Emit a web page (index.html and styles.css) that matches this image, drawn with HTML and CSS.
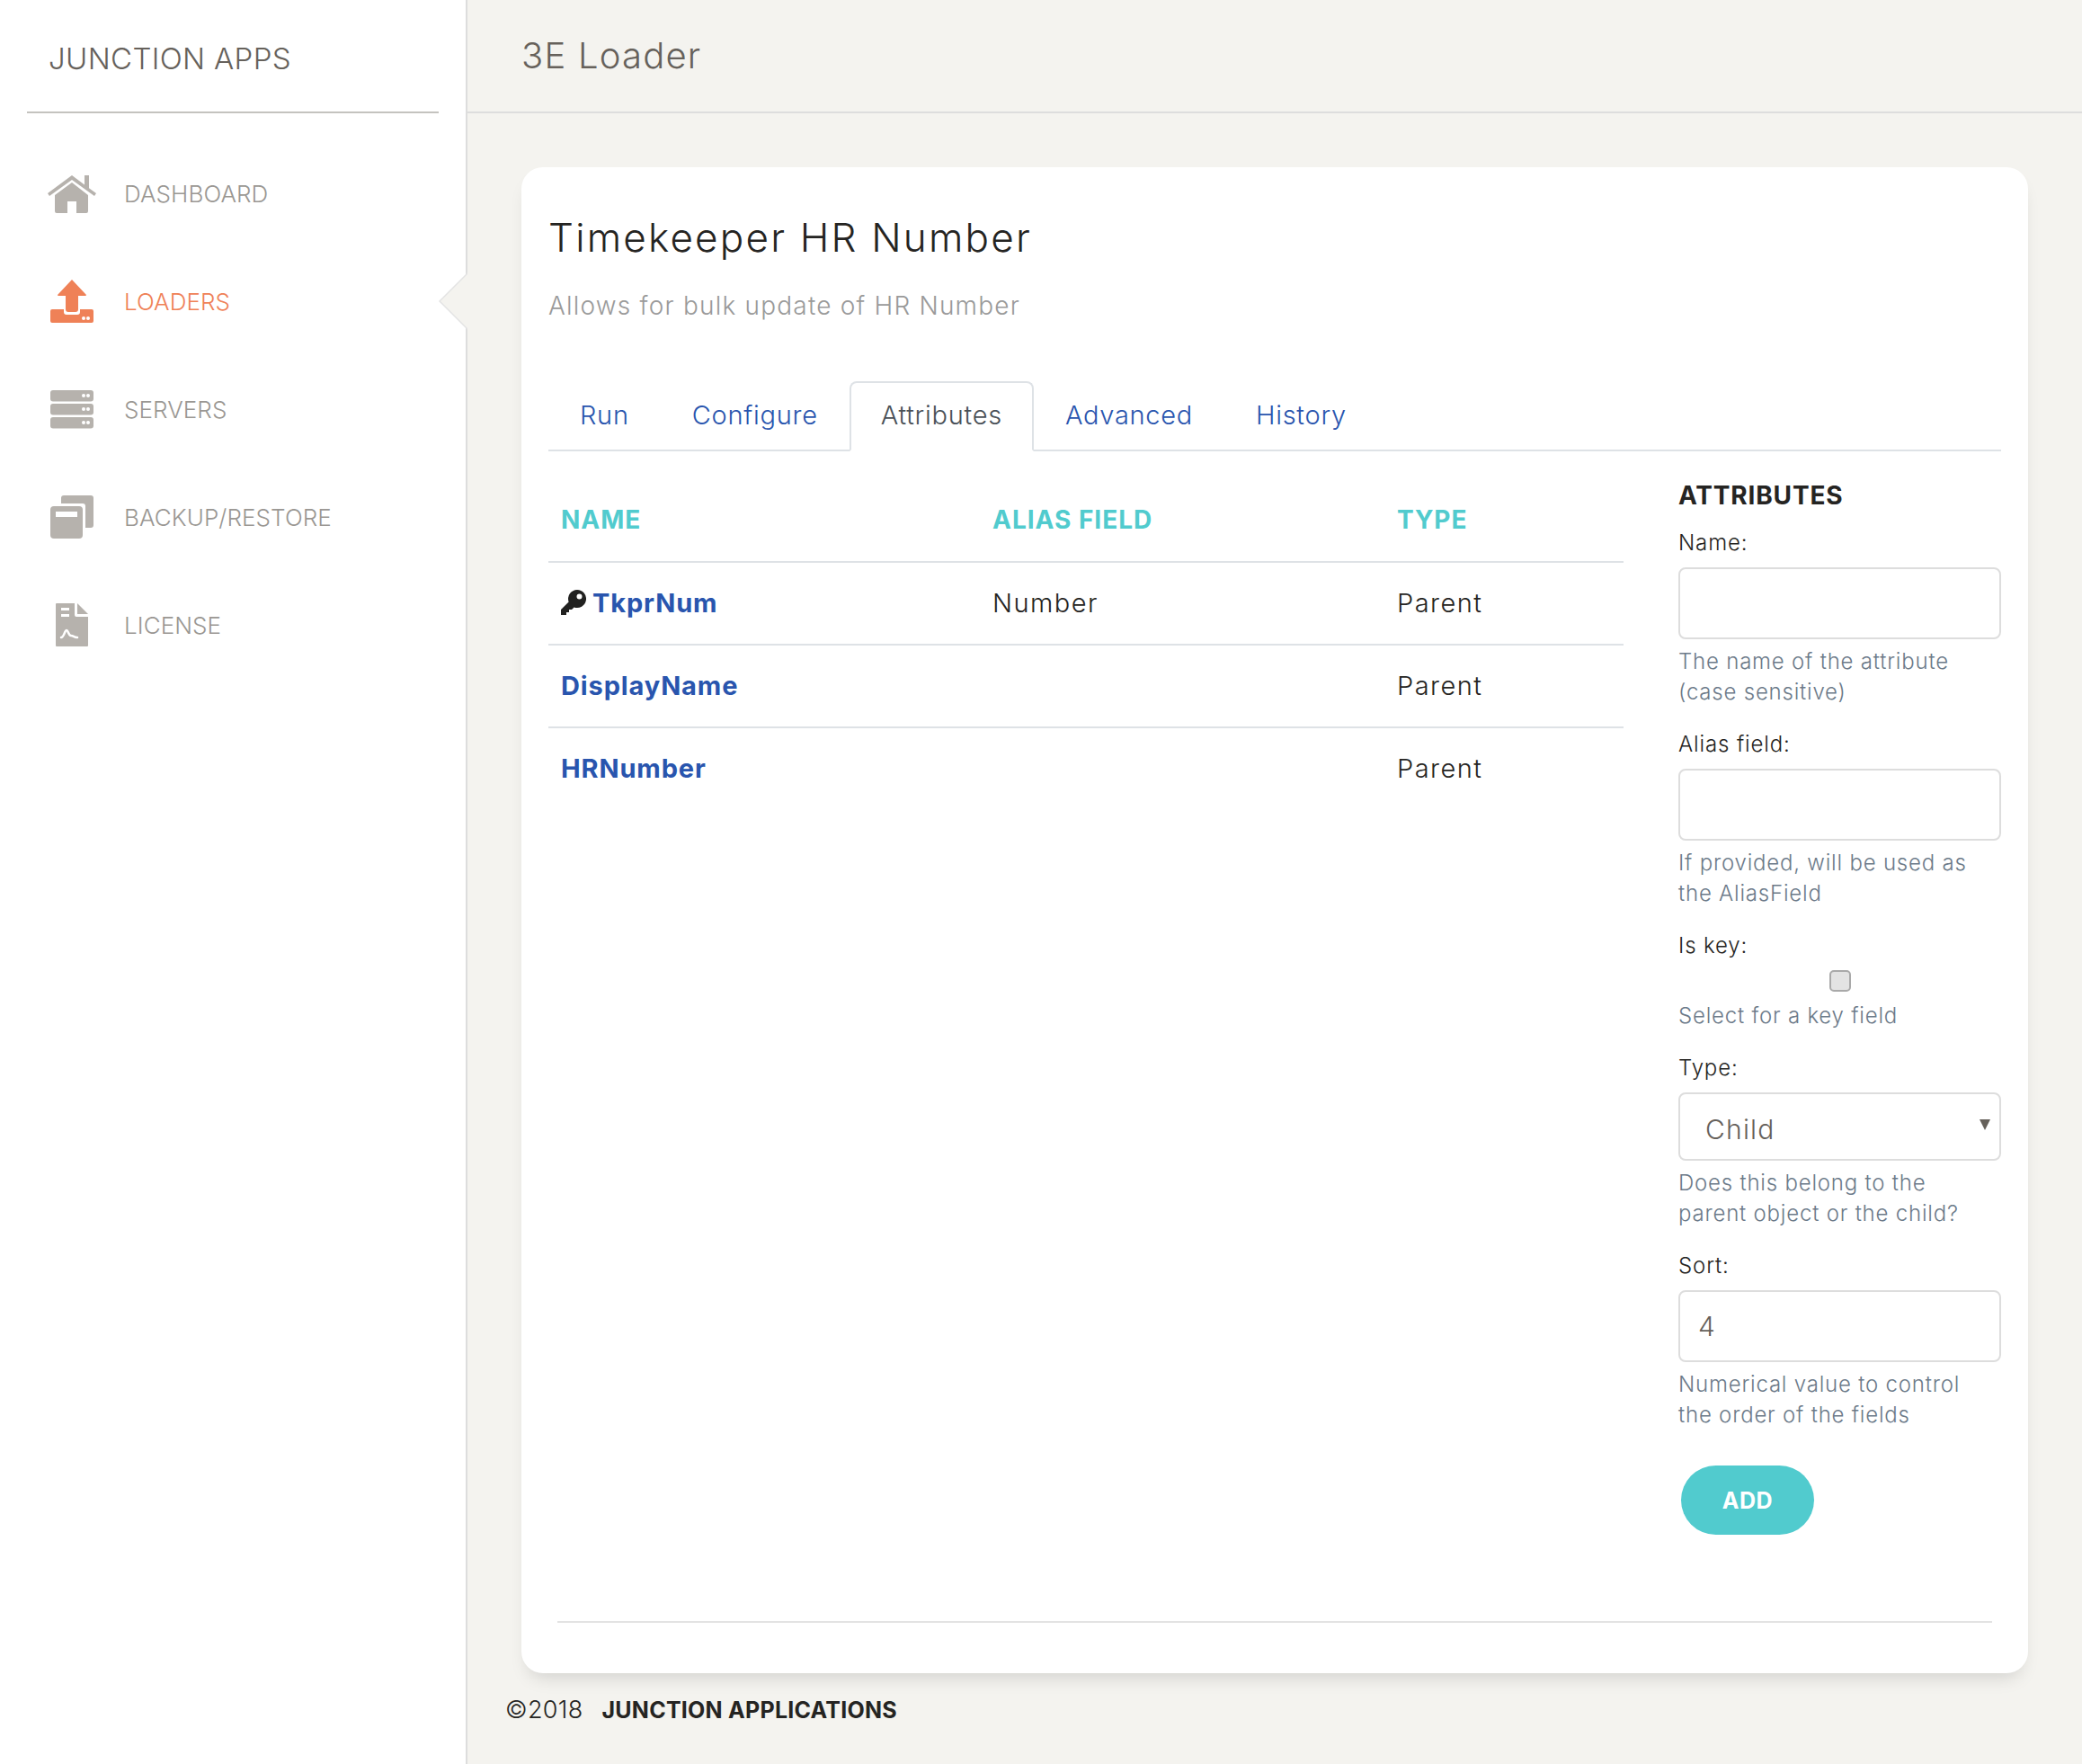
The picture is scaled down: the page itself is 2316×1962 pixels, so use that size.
FILE: index.html
```html
<!DOCTYPE html>
<html lang="en">
	<head>
		<meta charset="UTF-8" />
		<title>3E Loader</title>
		<link rel="stylesheet" href="styles.css">
	</head>
	<body>
		<aside class="sidebar">
			<div class="brand">JUNCTION APPS</div>
			<nav class="nav">
				<a class="nav-item">
					<svg class="nav-icon" viewBox="-3 0 54 48"><path d="M-3 24L24 4L38 14.5V4H43V18.3L51 24L49 27L24 9L-1 27Z"/><path d="M24 12L42 26V44a2 2 0 0 1-2 2H29V33H19V46H7a2 2 0 0 1-2-2V26Z"/></svg>
					<span>DASHBOARD</span>
				</a>
				<a class="nav-item active">
					<svg class="nav-icon" viewBox="-3 0 54 48"><path d="M24 0L40 17a1 1 0 0 1-1 1H31V33a3 3 0 0 1-3 3H20a3 3 0 0 1-3-3V18H9a1 1 0 0 1-1-1Z"/><path d="M2 33H15V36a3 3 0 0 0 3 3H30a3 3 0 0 0 3-3V33H46a2 2 0 0 1 2 2V46a2 2 0 0 1-2 2H2a2 2 0 0 1-2-2V35a2 2 0 0 1 2-2Z"/><circle class="cut" cx="37" cy="43" r="2"/><circle class="cut" cx="42" cy="43" r="2"/></svg>
					<span>LOADERS</span>
				</a>
				<a class="nav-item">
					<svg class="nav-icon" viewBox="-3 0 54 48"><rect y="3" width="48" height="12.5" rx="3"/><rect y="18" width="48" height="12.5" rx="3"/><rect y="33" width="48" height="12.5" rx="3"/><circle class="cut" cx="37" cy="9" r="2"/><circle class="cut" cx="42" cy="9" r="2"/><circle class="cut" cx="37" cy="24" r="2"/><circle class="cut" cx="42" cy="24" r="2"/><circle class="cut" cx="37" cy="39" r="2"/><circle class="cut" cx="42" cy="39" r="2"/></svg>
					<span>SERVERS</span>
				</a>
				<a class="nav-item">
					<svg class="nav-icon" viewBox="-3 0 54 48"><path d="M15 0H45a3 3 0 0 1 3 3V33a3 3 0 0 1-3 3H39V12a3 3 0 0 0-3-3H12V3a3 3 0 0 1 3-3Z"/><rect y="12" width="36" height="36" rx="4"/><rect class="cut" x="6" y="18" width="24" height="6"/></svg>
					<span>BACKUP/RESTORE</span>
				</a>
				<a class="nav-item">
					<svg class="nav-icon" viewBox="-3 0 54 48"><path d="M7 0H27V13a2 2 0 0 0 2 2H42V47a1 1 0 0 1-1 1H7a1 1 0 0 1-1-1V1a1 1 0 0 1 1-1Z"/><path d="M30 0L42 12H30Z"/><rect class="cut" x="12" y="5" width="9" height="3"/><rect class="cut" x="12" y="12" width="9" height="3"/><path class="cut-line" d="M12 38C15 38 16 30 18 30C20 30 20 36 23 36C26 36 26 38 30 38"/></svg>
					<span>LICENSE</span>
				</a>
			</nav>
		</aside>

		<main class="main">
			<header class="topbar">3E Loader</header>
			<section class="card">
				<h1>Timekeeper HR Number</h1>
				<p class="subtitle">Allows for bulk update of HR Number</p>

				<ul class="tabs">
					<li><a>Run</a></li>
					<li><a>Configure</a></li>
					<li><a class="current">Attributes</a></li>
					<li><a>Advanced</a></li>
					<li><a>History</a></li>
				</ul>

				<div class="columns">
					<table class="attr-table">
						<thead>
							<tr><th class="col-name">NAME</th><th class="col-alias">ALIAS FIELD</th><th>TYPE</th></tr>
						</thead>
						<tbody>
							<tr>
								<td>
									<svg class="key" viewBox="0 0 28 28"><path fill-rule="evenodd" d="M18 0A10 10 0 1 1 14.6 19.4L12 22H9V25H6V28H0V22L8.600 13.400A10 10 0 0 1 18 0ZM20.500 4.500A3 3 0 1 0 20.500 10.500A3 3 0 1 0 20.500 4.500Z"/></svg><a class="attr-link">TkprNum</a>
								</td>
								<td>Number</td>
								<td>Parent</td>
							</tr>
							<tr><td><a class="attr-link">DisplayName</a></td><td></td><td>Parent</td></tr>
							<tr><td><a class="attr-link">HRNumber</a></td><td></td><td>Parent</td></tr>
						</tbody>
					</table>

					<form class="attr-form">
						<h4>ATTRIBUTES</h4>

						<label>Name:</label>
						<input type="text" class="field" />
						<small>The name of the attribute<br>(case sensitive)</small>

						<label>Alias field:</label>
						<input type="text" class="field" />
						<small>If provided, will be used as<br>the AliasField</small>

						<label>Is key:</label>
						<div class="check-row"><input type="checkbox" class="check" /></div>
						<small>Select for a key field</small>

						<label>Type:</label>
						<div class="select-wrap">
							<select class="field select">
								<option>Child</option>
								<option>Parent</option>
							</select>
						</div>
						<small>Does this belong to the<br>parent object or the child?</small>

						<label>Sort:</label>
						<input type="text" class="field" value="4" />
						<small>Numerical value to control<br>the order of the fields</small>

						<button type="button" class="add-btn">ADD</button>
					</form>
				</div>

				<hr class="card-rule" />
			</section>
			<footer class="footer">
				<span>©2018</span>
				<strong>JUNCTION APPLICATIONS</strong>
			</footer>
		</main>
	</body>
</html>
```

FILE: styles.css
```css
* {
	box-sizing: border-box;
}
body {
	margin: 0;
	min-height: 100vh;
	display: flex;
	background: #f4f3ef;
	color: #252422;
	font-family: Inter, "Open Sans", sans-serif;
	font-size: 29px;
	letter-spacing: 0.03em;
}
.sidebar {
	width: 520px;
	flex: none;
	position: relative;
	background: #fff;
	border-right: 2px solid #dddddd;
	padding: 0 30px;
}
.brand {
	height: 126px;
	padding: 46px 0 0 24px;
	border-bottom: 2px solid #c4c3bf;
	color: #66615b;
	font-size: 33px;
	font-weight: 300;
	line-height: 38px;
	letter-spacing: 0.01em;
}
.nav {
	display: flex;
	flex-direction: column;
	gap: 72px;
	padding-top: 65px;
}
.nav-item {
	display: flex;
	align-items: center;
	gap: 31px;
	height: 48px;
	margin-left: 23px;
	color: #9a9793;
	font-size: 26px;
	font-weight: 300;
	letter-spacing: 0.003em;
}
.nav-item.active {
	color: #ef8157;
}
.nav-icon {
	width: 54px;
	height: 48px;
	flex: none;
	fill: #b6b2ad;
}
.active .nav-icon {
	fill: #ef8157;
}
.nav-icon .cut {
	fill: #fff;
}
.cut-line {
	fill: none;
	stroke: #fff;
	stroke-width: 2.500;
	stroke-linecap: round;
}
/* notch pointing at the current page: grey outline, page colour on top */
.nav-item.active::before,
.nav-item.active::after {
	content: "";
	position: absolute;
	right: -2px;
	top: 303px;
	width: 32px;
	height: 64px;
	background: #e3e3e3;
	clip-path: polygon(100% 0, 0 50%, 100% 100%);
}
.nav-item.active::after {
	top: 305px;
	width: 30px;
	height: 60px;
	background: #f4f3ef;
}

.main {
	flex: 1;
	display: flex;
	flex-direction: column;
}
.topbar {
	height: 126px;
	padding: 38px 0 0 60px;
	border-bottom: 2px solid #dddddd;
	color: #66615b;
	font-size: 40px;
	font-weight: 300;
	line-height: 48px;
	letter-spacing: 0.03em;
}
.card {
	margin: 60px 60px 0;
	padding: 50px 30px 56px;
	background: #fff;
	border-radius: 24px;
	box-shadow: 0 12px 20px -8px rgba(0, 0, 0, 0.15);
}
h1 {
	margin: 0;
	font-size: 44px;
	font-weight: 300;
	line-height: 56px;
	letter-spacing: 0.05em;
}
.subtitle {
	margin: 28px 0 64px;
	color: #9a9a9a;
	font-size: 28px;
	font-weight: 300;
	line-height: 40px;
	letter-spacing: 0.043em;
}
.tabs {
	display: flex;
	list-style: none;
	margin: 0;
	padding: 0;
	height: 78px;
	border-bottom: 2px solid #dee2e6;
}
.tabs a {
	display: block;
	height: 78px;
	padding: 0 33px;
	border: 2px solid transparent;
	border-radius: 8px 8px 0 0;
	color: #2955ae;
	font-weight: 300;
	line-height: 72px;
	letter-spacing: 0.025em;
}
.tabs a.current {
	border-color: #dee2e6 #dee2e6 #fff;
	color: #495057;
	background: #fff;
}

.columns {
	display: flex;
	justify-content: space-between;
	padding-top: 32px;
}
.attr-table {
	width: 1196px;
	height: 100%;
	border-collapse: collapse;
	table-layout: fixed;
	align-self: flex-start;
}
.col-name {
	width: 480px;
}
.col-alias {
	width: 450px;
}
.attr-table th {
	height: 91px;
	padding: 0 14px 2px;
	text-align: left;
	color: #51cbce;
	font-weight: 700;
	font-size: 28px;
	letter-spacing: 0.035em;
}
.attr-table td {
	height: 92px;
	padding: 0 14px 2px;
	border-top: 2px solid #dee2e6;
	font-weight: 300;
	letter-spacing: 0.05em;
}
.attr-link {
	color: #2955ae;
	font-weight: 700;
	letter-spacing: 0.03em;
}
.key {
	width: 28px;
	height: 28px;
	margin-right: 7px;
	vertical-align: -3px;
	fill: #212120;
}

.attr-form {
	width: 359px;
	display: flex;
	flex-direction: column;
	font-size: 24px;
	line-height: 34px;
}
h4 {
	margin: 0 0 19px;
	font-size: 28px;
	font-weight: 700;
	line-height: 34px;
	letter-spacing: 0.03em;
}
.attr-form label {
	margin-bottom: 10px;
	font-weight: 300;
}
.attr-form small {
	margin: 8px 0 24px;
	color: #6c7a89;
	font-size: 24px;
	font-weight: 300;
	letter-spacing: 0.033em;
}
.field {
	width: 100%;
	height: 80px;
	padding: 0 20px;
	border: 2px solid #dddddd;
	border-radius: 8px;
	background: #fff;
	color: #66615b;
	font: 300 30px Inter, sans-serif;
	letter-spacing: 0.04em;
}
.check-row {
	display: flex;
	justify-content: center;
	height: 24px;
	margin: 0 0 2px;
}
.check {
	appearance: none;
	width: 24px;
	height: 24px;
	margin: 0;
	border: 2px solid #a9a9a9;
	border-radius: 5px;
	background: #e3e3e3;
}
.select-wrap {
	position: relative;
}
.select {
	display: block;
	height: 76px;
	padding: 6px 28px 0;
	appearance: none;
}
.select-wrap::after {
	content: "";
	position: absolute;
	right: 12px;
	top: 30px;
	border: solid transparent;
	border-width: 12px 6px 0;
	border-top-color: #66615b;
}
.add-btn {
	align-self: flex-start;
	width: 148px;
	height: 77px;
	margin: 15px 0 0 3px;
	border: 0;
	border-radius: 40px;
	background: #51cbce;
	color: #fff;
	font: 700 25px Inter, sans-serif;
	letter-spacing: 0.02em;
}
.card-rule {
	height: 2px;
	margin: 96px 10px 0;
	border: 0;
	background: #e3e3e3;
}
.footer {
	display: flex;
	align-items: center;
	gap: 21px;
	padding: 24px 0 0 42px;
	line-height: 34px;
	font-size: 27px;
	font-weight: 300;
	letter-spacing: 0.01em;
}
.footer strong {
	font-size: 25px;
	font-weight: 700;
	letter-spacing: 0.01em;
}
```
